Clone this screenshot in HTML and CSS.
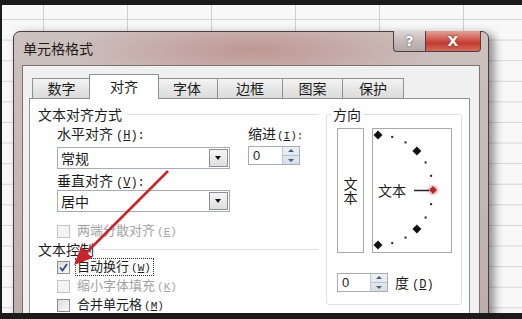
FILE: index.html
```html
<!DOCTYPE html>
<html>
<head>
    <title>单元格格式</title>
    <link rel="stylesheet" href="styles.css">
</head>
<body>
    <div class="screen">
        <div class="sheet">
            <div class="dialog">
                <div class="titlebar">
                    <span class="title">单元格格式</span>
                    <div class="caption">
                        <span class="btn-help">?</span>
                        <span class="btn-close">X</span>
                    </div>
                </div>
                <div class="client">
                    <div class="tabs">
                        <span class="tab w59">数字</span>
                        <span class="tab active">对齐</span>
                        <span class="tab w62">字体</span>
                        <span class="tab w66">边框</span>
                        <span class="tab w61">图案</span>
                        <span class="tab w62">保护</span>
                    </div>
                    <div class="page">
                        <div class="left">
                            <div class="group-head">文本对齐方式</div>
                            <div class="align-row">
                                <div class="col-a">
                                    <div class="lbl first">水平对齐<span class="acc">(<u>H</u>):</span></div>
                                    <div class="combo"><span>常规</span><span class="drop"></span></div>
                                    <div class="lbl">垂直对齐<span class="acc">(<u>V</u>):</span></div>
                                    <div class="combo second"><span>居中</span><span class="drop"></span></div>
                                </div>
                                <div class="col-b">
                                    <div class="lbl first">缩进<span class="acc">(<u>I</u>):</span></div>
                                    <div class="spin"><span class="val">0</span><span class="arrows"><i class="up"></i><i class="down"></i></span></div>
                                </div>
                            </div>
                            <div class="check disabled justify"><span class="cb"></span><span class="cb-label">两端分散对齐<span class="acc">(<u>E</u>)</span></span></div>
                            <div class="group-head control">文本控制</div>
                            <div class="checks">
                                <div class="check"><span class="cb checked"><svg width="11" height="11" viewBox="0 0 11 11"><path d="M2 5.5 L4.5 8.5 L9 2" fill="none" stroke="#2f4a86" stroke-width="1.8"/></svg></span><span class="cb-label focus">自动换行<span class="acc">(<u>W</u>)</span></span></div>
                                <div class="check disabled"><span class="cb"></span><span class="cb-label">缩小字体填充<span class="acc">(<u>K</u>)</span></span></div>
                                <div class="check"><span class="cb"></span><span class="cb-label">合并单元格<span class="acc">(<u>M</u>)</span></span></div>
                            </div>
                        </div>
                        <fieldset class="orient">
                            <legend>方向</legend>
                            <div class="orient-boxes">
                                <div class="vtext">文本</div>
                                <div class="dial">
                                    <svg width="78" height="123" viewBox="0 0 78 123">
                                        <polygon points="5,1.5 9.5,6 5,10.5 0.5,6" fill="#111"/>
                                        <rect x="18.2" y="6.9" width="2" height="2" fill="#222"/>
                                        <rect x="31.5" y="12.4" width="2" height="2" fill="#222"/>
                                        <polygon points="43.9,17.6 48.4,22.1 43.9,26.6 39.4,22.1" fill="#111"/>
                                        <rect x="51.6" y="32.5" width="2" height="2" fill="#222"/>
                                        <rect x="57.1" y="45.8" width="2" height="2" fill="#222"/>
                                        <circle cx="60" cy="61" r="5.5" fill="#f1cfcf"/>
                                        <polygon points="60,57 64,61 60,65 56,61" fill="#b3262b"/>
                                        <rect x="57.1" y="74.2" width="2" height="2" fill="#222"/>
                                        <rect x="51.6" y="87.5" width="2" height="2" fill="#222"/>
                                        <polygon points="43.9,95.4 48.4,99.9 43.9,104.4 39.4,99.9" fill="#111"/>
                                        <rect x="31.5" y="107.6" width="2" height="2" fill="#222"/>
                                        <rect x="18.2" y="113.1" width="2" height="2" fill="#222"/>
                                        <polygon points="5,111.5 9.5,116 5,120.5 0.5,116" fill="#111"/>
                                        <text x="5" y="67" class="dial-text">文本</text>
                                        <line x1="41" y1="61.5" x2="56" y2="61.5" stroke="#222" stroke-width="1.5"/>
                                    </svg>
                                </div>
                            </div>
                            <div class="degree">
                                <div class="spin small"><span class="val">0</span><span class="arrows"><i class="up"></i><i class="down"></i></span></div>
                                <span class="deg-label">度<span class="acc">(<u>D</u>)</span></span>
                            </div>
                        </fieldset>
                    </div>
                </div>
            </div>
        </div>
        <svg class="arrow" width="522" height="319" viewBox="0 0 522 319">
            <line x1="168" y1="171" x2="84" y2="255" stroke="#c8242b" stroke-width="2.5"/>
            <polygon points="74,265 92.4,258 81,246.6" fill="#c8242b"/>
        </svg>
    </div>
</body>
</html>
```

FILE: styles.css
```css
* {
    box-sizing: border-box;
}
body {
    margin: 0;
    font-family: "Noto Sans CJK SC", "Noto Sans", sans-serif;
    font-size: 14px;
    color: #1c1c1c;
}
.screen {
    position: relative;
    width: 522px;
    height: 319px;
    overflow: hidden;
    border-style: solid;
    border-color: #1b1b1b;
    border-width: 5px 0 6px 2px;
}
.sheet {
    height: 100%;
    overflow: hidden;
    padding: 26px 0 0 11px;
    background:
        linear-gradient(to right, #cfcfcf 1px, transparent 1px) 41px 0 / 84px 100%,
        linear-gradient(#d6d6d6 1px, transparent 1px) 0 14px / 100% 20.6px,
        #f8f8f8;
}

/* window frame */
.dialog {
    width: 476px;
    height: 300px;
    display: flex;
    flex-direction: column;
    padding: 0 8px;
    border: 1px solid #4b3d3c;
    border-radius: 7px 7px 0 0;
    background:
        radial-gradient(ellipse 190px 34px at 240px 18px, rgba(176, 100, 98, .45), transparent),
        linear-gradient(#cdc1be, #bcadaa);
    box-shadow: 5px 3px 10px rgba(0, 0, 0, .45);
}
.titlebar {
    height: 33px;
    display: flex;
    align-items: flex-start;
}
.title {
    padding-left: 1px;
    line-height: 33px;
    color: #1e1a1a;
}
.caption {
    display: flex;
    margin: -1px -1px 0 auto;
}
.btn-help,
.btn-close {
    height: 21px;
    border: 1px solid #4e403f;
    border-top: none;
    text-align: center;
    font: bold 14px/20px "DejaVu Sans", sans-serif;
    color: #fff;
}
.btn-help {
    width: 33px;
    border-radius: 0 0 0 4px;
    background: linear-gradient(#ddd6d5, #c2b8b6 55%, #b3a8a6);
    text-shadow: 0 0 2px #444;
}
.btn-close {
    width: 55px;
    border-left: none;
    border-radius: 0 0 4px 0;
    background: linear-gradient(#e3a197, #cc4d40 50%, #c13a2e 60%, #d36c5e);
    text-shadow: 0 0 2px #6b1a14;
}

/* client area */
.client {
    flex: 1;
    display: flex;
    flex-direction: column;
    padding: 8px 9px 0 6px;
    background: #f0f0f0;
    border: 1px solid #7f7170;
    border-bottom: none;
}
.tabs {
    display: flex;
    align-items: flex-end;
    height: 25px;
    padding-left: 3px;
    margin-bottom: -1px;
    position: relative;
    z-index: 1;
}
.tab {
    height: 21px;
    margin-left: -1px;
    text-align: center;
    line-height: 19px;
    border: 1px solid #8d9096;
    background: linear-gradient(#f4f4f4, #e6e6e6 50%, #dcdcdc);
}
.tab:first-child {
    margin-left: 0;
}
.w59 { width: 59px; }
.w61 { width: 61px; }
.w62 { width: 62px; }
.w66 { width: 66px; }
.tab.active {
    position: relative;
    z-index: 2;
    width: 70px;
    height: 25px;
    margin: 0 -2px 0 -2px;
    line-height: 22px;
    border-bottom: none;
    background: #fff;
}
.page {
    flex: 1;
    display: grid;
    grid-template-columns: 280px 136px;
    column-gap: 8px;
    align-items: start;
    padding: 8px 7px 0 8px;
    background: #fff;
    border: 1px solid #8d9096;
}

/* left column */
.group-head {
    display: flex;
    align-items: center;
    height: 14px;
    line-height: 14px;
}
.group-head::after {
    content: "";
    flex: 1;
    height: 1px;
    margin-left: 5px;
    background: #dde0e5;
}
.group-head.control {
    margin-top: 3px;
}
.align-row {
    display: flex;
    gap: 18px;
    margin-left: 19px;
}
.col-a {
    width: 173px;
}
.col-b {
    width: 52px;
}
.lbl {
    height: 14px;
    line-height: 14px;
    margin-top: 4px;
    white-space: nowrap;
}
.lbl.first {
    margin-top: 5px;
}
.acc {
    font-family: "Liberation Mono", monospace;
    font-size: 12px;
    margin-left: 3px;
}
.col-b .acc {
    font-size: 11px;
    margin-left: 1px;
}
.combo {
    display: flex;
    align-items: center;
    height: 22px;
    margin-top: 7px;
    padding: 0 1px 0 3px;
    border: 1px solid #a7adb6;
    background: #fff;
}
.combo.second {
    margin-top: 3px;
}
.drop {
    position: relative;
    width: 19px;
    height: 18px;
    margin-left: auto;
    border: 1px solid #8d8f93;
    background: linear-gradient(#f6f6f6, #dedede);
}
.drop::after {
    content: "";
    position: absolute;
    left: 5px;
    top: 6px;
    border-style: solid;
    border-width: 4px 3.5px 0 3.5px;
    border-color: #111 transparent transparent transparent;
}
.spin {
    display: flex;
    height: 19px;
    margin-top: 6px;
    border: 1px solid #a7adb6;
    background: #fff;
}
.spin .val {
    flex: 1;
    padding-left: 4px;
    font: 13px/17px "Liberation Sans", sans-serif;
}
.arrows {
    width: 17px;
    display: flex;
    flex-direction: column;
    border-left: 1px solid #bfc8d4;
    background: linear-gradient(#eef2f7, #d6dee8);
}
.arrows i {
    flex: 1;
    position: relative;
}
.arrows .up {
    border-bottom: 1px solid #b9c3cf;
}
.arrows i::after {
    content: "";
    position: absolute;
    left: 5px;
    border-style: solid;
    border-color: transparent;
}
.arrows .up::after {
    top: 2px;
    border-width: 0 3px 3px 3px;
    border-bottom-color: #4b5c78;
}
.arrows .down::after {
    top: 3px;
    border-width: 3px 3px 0 3px;
    border-top-color: #4b5c78;
}

/* check boxes */
.check {
    display: flex;
    align-items: center;
    height: 16px;
    margin-left: 19px;
    font-size: 13px;
}
.check .acc {
    font-size: 11px;
    margin-left: 2px;
}
.check.justify {
    margin-top: 11px;
}
.checks {
    display: flex;
    flex-direction: column;
    gap: 3px;
    margin-top: 3px;
}
.cb {
    width: 13px;
    height: 13px;
    display: flex;
    align-items: center;
    justify-content: center;
    border: 1px solid #8e8f8f;
    background: linear-gradient(135deg, #dadada, #fbfbfb);
}
.cb-label {
    margin-left: 5px;
    padding: 0 2px 0 1px;
    line-height: 14px;
    border: 1px dotted transparent;
}
.cb-label.focus {
    border-color: #333;
}
.check.disabled .cb {
    border-color: #c4c4c4;
    background: #f4f4f4;
}
.check.disabled .cb-label {
    color: #a2a2a2;
}

/* orientation group */
.orient {
    margin: 0;
    padding: 0 9px 12px 10px;
    min-width: 0;
    border: 1px solid #dde0e5;
    border-radius: 3px;
}
.orient legend {
    margin-left: -6px;
    padding: 0 2px;
    line-height: 14px;
}
.orient-boxes {
    display: flex;
    gap: 8px;
    margin-top: 7px;
}
.vtext {
    width: 27px;
    height: 125px;
    display: flex;
    align-items: center;
    justify-content: center;
    writing-mode: vertical-rl;
    line-height: 14px;
    border: 1px solid #a9a9a9;
}
.dial {
    width: 80px;
    height: 125px;
    border: 1px solid #a9a9a9;
}
.dial svg {
    display: block;
}
.dial-text {
    font-family: "Noto Sans CJK SC", sans-serif;
    font-size: 14px;
    fill: #1c1c1c;
}
.degree {
    display: flex;
    align-items: center;
    gap: 7px;
    margin-top: 19px;
}
.spin.small {
    width: 51px;
    margin-top: 0;
}
.arrow {
    position: absolute;
    left: -2px;
    top: -5px;
}
```
